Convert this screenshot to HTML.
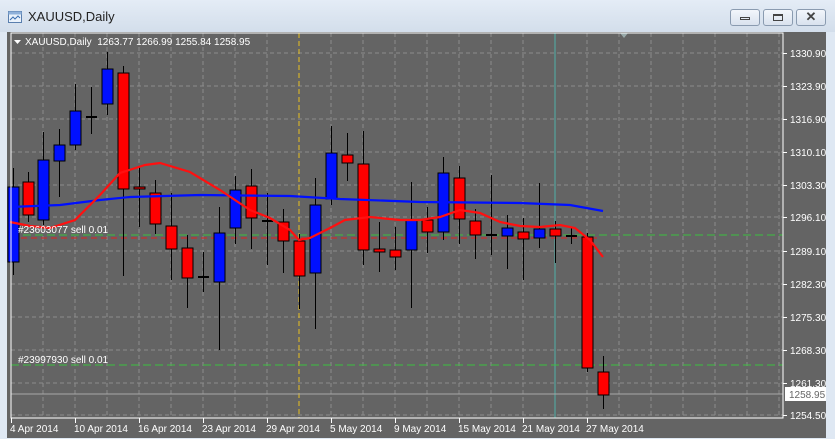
<!DOCTYPE html>
<html><head><style>
html,body{margin:0;padding:0;width:835px;height:439px;overflow:hidden;background:#dfe8f3;font-family:"Liberation Sans",sans-serif}
.title{position:absolute;left:0;top:0;width:835px;height:32px;background:linear-gradient(#e4ecf6,#d3deeb)}
.btn{position:absolute;top:9px;width:28px;height:15px;border:1px solid #8a9bb0;border-radius:3px;background:linear-gradient(#f2f6fb,#d9e2ee)}
</style></head><body>
<div class="title"></div>
<svg style="position:absolute;left:7px;top:9px" width="16" height="16" viewBox="0 0 16 16"><rect x="1.5" y="2.5" width="13" height="11" fill="#eaf2fb" stroke="#5a7fae"/><rect x="1.5" y="2.5" width="13" height="3" fill="#8fb1da"/><path d="M3 11 L6 8 L8 10 L11 7 L13 9" stroke="#3a6fb0" fill="none"/></svg>
<div style="position:absolute;left:28px;top:9px;font-size:13px;color:#222">XAUUSD,Daily</div>
<div class="btn" style="left:730px"><div style="position:absolute;left:9px;top:7px;width:10px;height:3px;border:1px solid #444;box-sizing:border-box"></div></div>
<div class="btn" style="left:763px"><div style="position:absolute;left:9px;top:4px;width:10px;height:7px;border:1px solid #444;box-sizing:border-box;border-top-width:2px"></div></div>
<div class="btn" style="left:796px"><div style="position:absolute;left:0;top:-1px;width:28px;text-align:center;font-size:13px;font-weight:bold;color:#444">✕</div></div>
<svg style="position:absolute;left:0;top:0" width="835" height="439" viewBox="0 0 835 439" font-family="Liberation Sans, sans-serif" font-size="10">
<rect x="7" y="32" width="819" height="406" fill="#646464"/>
<g stroke="#8c8c8c" stroke-dasharray="4,3" stroke-width="1">
<path d="M43 33V418M75 33V418M107 33V418M139 33V418M171 33V418M203 33V418M235 33V418M267 33V418M331 33V418M363 33V418M395 33V418M427 33V418M459 33V418M491 33V418M523 33V418M587 33V418M619 33V418M651 33V418M683 33V418M715 33V418M747 33V418M779 33V418"/>
<path d="M11 53H783M11 86H783M11 119H783M11 152H783M11 185H783M11 217H783M11 251H783M11 284H783M11 317H783M11 350H783M11 383H783M11 415H783"/>
</g>
<path d="M299 33V418" stroke="#e8c020" stroke-dasharray="5,3"/>
<path d="M555 33V418" stroke="#4fb0a8"/>
<path d="M620 33l4 5 4-5z" fill="#9aa"/>
<path d="M11 235H783M11 365H783" stroke="#3cc040" stroke-dasharray="8,4"/>
<path d="M11 238H600" stroke="#e02020" stroke-dasharray="6,4"/>
<path d="M11 394H783" stroke="#a8a8a8"/>
<g stroke="#000" stroke-width="1" id="c"></g>
<g id="cs"></g>
<polyline fill="none" stroke="#0010ff" stroke-width="2.2" points="10,207 60,205 100,200 130,197 200,195 290,196 340,199 420,202 520,203 570,205 603,211"/>
<polyline fill="none" stroke="#ff1010" stroke-width="2.2" points="10,222 30,226 50,228 75,220 100,195 120,173 145,165 160,163 190,172 220,190 250,210 270,218 290,230 299,240 310,238 330,228 345,220 370,217 400,220 420,220 440,217 460,210 480,213 500,222 520,226 540,227 560,225 575,228 590,240 603,257"/>
<rect x="11" y="33" width="772" height="385" fill="none" stroke="#fff"/>
<g fill="#fff">
<path d="M14 40h7l-3.5 4z"/>
<text x="25" y="45">XAUUSD,Daily&#160;&#160;1263.77 1266.99 1255.84 1258.95</text>
<text x="18" y="233">#23603077 sell 0.01</text>
<text x="18" y="363">#23997930 sell 0.01</text>
<g id="yl"></g>
<g id="xl"></g>
</g>
<rect x="785" y="387" width="41" height="14" fill="#fff"/>
<text x="789" y="398" fill="#666">1258.95</text>
</svg>
<script>
var ns="http://www.w3.org/2000/svg",svg=document.querySelector('svg:last-of-type');
var g=document.getElementById('cs');
var d=[[13,187,262,168,275,'b'],[28,182,215,172,222,'r'],[43,160,220,132,225,'b'],[59,145,161,129,197,'b'],[75,111,145,84,150,'b'],[91,117,117,87,134,'d'],[107,69,104,52,115,'b'],[123,73,189,66,276,'r'],[139,187,189,167,227,'r'],[155,193,224,180,234,'r'],[171,226,249,193,280,'r'],[187,248,278,235,308,'r'],[203,277,277,252,292,'d'],[219,233,282,207,350,'b'],[235,190,228,176,244,'b'],[251,186,218,169,249,'r'],[267,221,221,193,265,'d'],[283,222,241,209,273,'r'],[299,241,276,234,309,'r'],[315,205,273,178,329,'b'],[331,153,199,126,205,'b'],[347,155,163,133,181,'r'],[363,164,250,131,265,'r'],[379,249,252,222,272,'r'],[395,250,257,227,270,'r'],[411,220,250,182,308,'b'],[427,220,232,207,253,'r'],[443,173,232,157,240,'b'],[459,178,219,166,244,'r'],[475,221,235,209,259,'r'],[491,235,235,175,255,'d'],[507,228,236,215,269,'b'],[523,232,239,218,280,'r'],[539,229,238,183,248,'b'],[555,229,236,221,263,'r'],[571,236,236,228,244,'d'],[587,237,368,233,372,'r'],[603,372,395,356,409,'r']];
d.forEach(function(c){
 var l=document.createElementNS(ns,'line');l.setAttribute('x1',c[0]+.5);l.setAttribute('x2',c[0]+.5);l.setAttribute('y1',c[3]);l.setAttribute('y2',c[4]);l.setAttribute('stroke','#000');g.appendChild(l);
 if(c[5]=='d'){var r=document.createElementNS(ns,'rect');r.setAttribute('x',c[0]-5);r.setAttribute('y',c[1]-1);r.setAttribute('width',11);r.setAttribute('height',2);r.setAttribute('fill','#000');g.appendChild(r);}
 else{var r=document.createElementNS(ns,'rect');r.setAttribute('x',c[0]-5);r.setAttribute('y',c[1]);r.setAttribute('width',11);r.setAttribute('height',Math.max(2,c[2]-c[1]));r.setAttribute('fill',c[5]=='b'?'#0010ff':'#ff0000');r.setAttribute('stroke','#000');g.appendChild(r);}
});
var yl=document.getElementById('yl');
[['1330.90',53],['1323.90',86],['1316.90',119],['1310.10',152],['1303.30',185],['1296.10',217],['1289.10',251],['1282.30',284],['1275.30',317],['1268.30',350],['1261.30',383],['1254.50',415]].forEach(function(a){
 var t=document.createElementNS(ns,'text');t.setAttribute('x',790);t.setAttribute('y',a[1]+4);t.textContent=a[0];yl.appendChild(t);
 var l=document.createElementNS(ns,'rect');l.setAttribute('x',783);l.setAttribute('y',a[1]);l.setAttribute('width',4);l.setAttribute('height',1);yl.appendChild(l);
});
var xl=document.getElementById('xl');
[['4 Apr 2014',11],['10 Apr 2014',75],['16 Apr 2014',139],['23 Apr 2014',203],['29 Apr 2014',267],['5 May 2014',331],['9 May 2014',395],['15 May 2014',459],['21 May 2014',523],['27 May 2014',587]].forEach(function(a){
 var t=document.createElementNS(ns,'text');t.setAttribute('x',a[1]-1);t.setAttribute('y',432);t.textContent=a[0];xl.appendChild(t);
 var l=document.createElementNS(ns,'rect');l.setAttribute('x',a[1]);l.setAttribute('y',418);l.setAttribute('width',1);l.setAttribute('height',5);xl.appendChild(l);
});
</script>
</body></html>
